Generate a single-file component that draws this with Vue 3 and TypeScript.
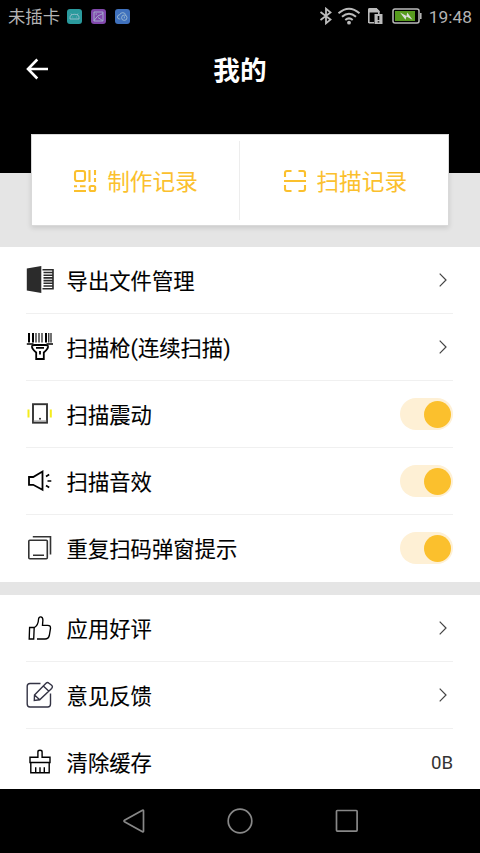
<script setup lang="ts">
import { ref } from 'vue'

type IconName = 'export' | 'gun' | 'vibrate' | 'sound' | 'popup' | 'like' | 'feedback' | 'clean'

interface Row {
  icon: IconName
  label: string
  kind: 'link' | 'switch' | 'value'
  value?: string
  on?: boolean
}

const groups = ref<Row[][]>([
  [
    { icon: 'export', label: '导出文件管理', kind: 'link' },
    { icon: 'gun', label: '扫描枪(连续扫描)', kind: 'link' },
    { icon: 'vibrate', label: '扫描震动', kind: 'switch', on: true },
    { icon: 'sound', label: '扫描音效', kind: 'switch', on: true },
    { icon: 'popup', label: '重复扫码弹窗提示', kind: 'switch', on: true },
  ],
  [
    { icon: 'like', label: '应用好评', kind: 'link' },
    { icon: 'feedback', label: '意见反馈', kind: 'link' },
    { icon: 'clean', label: '清除缓存', kind: 'value', value: '0B' },
  ],
])
</script>

<template>
  <div class="screen">
    <header class="top">
      <div class="status">
        <span class="carrier">未插卡</span>
        <span class="badge teal">
          <svg viewBox="0 0 15 15"><path d="M3 10V8.5Q3 5.3 7.5 5.3T12 8.5V10ZM4.8 5.8 4 4.6M10.2 5.8 11 4.6M5.5 8h.6M9 8h.6" /></svg>
        </span>
        <span class="badge purple">
          <svg viewBox="0 0 15 15"><path d="M3 3h9v9H3ZM3 11.5Q6 6 12 4.5M7 8.5l4.5 3M4.5 5h1.5" /></svg>
        </span>
        <span class="badge blue">
          <svg viewBox="0 0 15 15"><path d="M5.3 10H4.5a2 2 0 0 1 0-4.1 3.4 3.4 0 0 1 6.3-.2M9.3 6a2.7 2.7 0 1 1 0 5.4 2.7 2.7 0 0 1 0-5.4ZM9.3 7.3v2" /></svg>
        </span>
        <span class="spacer"></span>
        <svg class="bt" viewBox="0 0 14 18"><path d="M1.5 5 11.5 12.6 7 16.3V1.7L11.5 5.4 1.5 13" /></svg>
        <svg class="wifi" viewBox="0 0 24 18">
          <path d="M1.5 6.3Q12-2.8 22.5 6.3M5 9.8Q12 3.8 19 9.8M8.3 13Q12 9.8 15.7 13" />
          <circle cx="12" cy="15.7" r="1.9" />
        </svg>
        <svg class="sim" viewBox="0 0 16 18">
          <path class="line" d="M1.8 16V3Q1.8 1.800 3 1.800H9L11.800 4.500V7M1.800 15.700H7" />
          <path class="fill" d="M1 5V3Q1 1 3 1H9.500L12.600 4V5.500H1Z" />
          <path class="fill" d="M7.500 7H15.500V17H7.500Z" />
          <path class="mark" d="M11.500 9v4M11.500 14.300v1.300" />
        </svg>
        <svg class="battery" viewBox="0 0 30 16">
          <rect class="shell" x="1" y="1" width="26" height="14" rx="2" />
          <path class="shell" d="M28.8 5v6" />
          <path class="charge" d="M3 3h20v10H3z" />
          <path class="bolt" d="M8 4.5 14.500 8l.8-3.500 5.200 7.300-6-3.200-1 3.200Z" />
        </svg>
        <span class="clock">19:48</span>
      </div>
      <div class="titlebar">
        <svg class="back" viewBox="0 0 24 24"><path d="M12.300 1.500 3 11l9.300 9.500M3 11H23" /></svg>
        <h1>我的</h1>
      </div>
    </header>

    <section class="hero">
      <div class="card">
        <button class="tab">
          <svg class="tab-icon" viewBox="0 0 24 24">
            <rect x="2" y="2" width="10" height="10" rx="2" />
            <path d="M16.5 1v12M22 1v5M22 9v4M1 17.2h3M7 17.2h5.5M1 22h12" />
            <rect x="16.700" y="17" width="5.500" height="5" rx="1.500" />
          </svg>
          <span>制作记录</span>
        </button>
        <button class="tab">
          <svg class="tab-icon" viewBox="0 0 24 24">
            <path d="M2 8V4Q2 2 4 2H8.500M15.500 2H20Q22 2 22 4V8M1 12H23M2 16V20Q2 22 4 22H8.500M15.500 22H20Q22 22 22 20V16" />
          </svg>
          <span>扫描记录</span>
        </button>
      </div>
    </section>

    <main class="groups">
      <section v-for="(rows, g) in groups" :key="g" class="group">
        <div v-for="row in rows" :key="row.icon" class="row">
          <svg v-if="row.icon === 'export'" class="icon" viewBox="0 0 28 28">
            <path class="dark" d="M.8 2.5 15.3 0v27L.8 24.5Z" />
            <path d="M16.500 3.700H27V22.800H16.500M17.500 6.500H27M17.500 9.200H27M17.500 11.900H27M17.500 14.600H27M17.500 17.300H27M17.500 20H27" stroke="#2b2b2b" stroke-width="1.600" />
          </svg>
          <svg v-else-if="row.icon === 'gun'" class="icon" viewBox="0 0 28 28">
            <path d="M3 0v9.500M7 0v9.500M20 0v9.500" stroke-width="2" />
            <path d="M10 0v9.500M13 0v9.500M16 0v9.500M22.800 0v9.500M25 0v9.500" stroke-width="1.100" />
            <path d="M.8 11H7.500M20.500 11H27" stroke-width="1.400" />
            <path d="M8.500 12H19.500Q22.300 12 22 14L21.500 15.500Q20.200 17.500 17.800 19.500V26H10.200V19.500Q7.800 17.500 6.500 15.500L6 14Q5.700 12 8.500 12Z" stroke-width="1.800" />
            <path d="M10 14.800h8M14 18v3.500" stroke-width="1.800" />
          </svg>
          <svg v-else-if="row.icon === 'vibrate'" class="icon" viewBox="0 0 28 28">
            <path class="yellow" d="M2.500 9.500v8M24.800 9.500v8" />
            <rect x="7" y="4.200" width="14" height="18.500" stroke="#333" stroke-width="1.900" />
            <path d="M7 21h14" stroke="#777" stroke-width=".8" />
            <circle class="dark" cx="14" cy="18.700" r="1" />
          </svg>
          <svg v-else-if="row.icon === 'sound'" class="icon" viewBox="0 0 28 28">
            <path d="M3 10H7.200L16.500 4.500V22.700L7.200 17.800H3Z" stroke-width="1.800" />
            <path d="M20 9.500 23.200 7.500M21.500 14H25.300M20 18.500 23.200 20.500" stroke-width="1.700" />
          </svg>
          <svg v-else-if="row.icon === 'popup'" class="icon" viewBox="0 0 28 28">
            <rect x="2.800" y="6.200" width="18.500" height="18.500" rx="1" stroke="#333" stroke-width="1.600" />
            <path d="M6.800 2.800H24.500V20.500M7 21.200H18" stroke="#333" stroke-width="1.600" />
          </svg>
          <svg v-else-if="row.icon === 'like'" class="icon" viewBox="0 0 28 28">
            <path d="M3.600 13.500H8.200L7.700 25H3.200ZM8.400 13.500Q12.300 11 12.500 5.500C12.600 2 16.800 2 16.900 6L16.500 11.300H21.700Q24.700 11.300 24.500 14.300L23.300 21.500Q22.500 25 19 25H11" stroke-width="1.350" />
          </svg>
          <svg v-else-if="row.icon === 'feedback'" class="icon" viewBox="0 0 28 28">
            <path d="M14.500 2.500H4Q1.200 2.500 1.200 5.300V23Q1.200 26 4 26H21.700Q24.500 26 24.500 23V12.500" stroke="#334" stroke-width="1.400" />
            <path d="M8.500 14 20 2.200Q21.500 .7 23 2.200L25.600 4.300Q27.200 5.800 25.600 7.500L13.700 18.800 8.300 19.500ZM8.500 14 13.700 18.800M17.300 5 22.700 10" stroke="#334" stroke-width="1.400" />
          </svg>
          <svg v-else class="icon" viewBox="0 0 28 28">
            <path d="M4 14.500V9.300H11.900V4Q11.900 2.300 14 2.300T16.100 4V9.300H24V14.500ZM4.800 14.500V24.700H23.200V14.500M9.700 24.700V19.200M14 24.700V19.200M18.300 24.700V19.200" stroke-width="1.400" />
          </svg>

          <span class="label">{{ row.label }}</span>

          <svg v-if="row.kind === 'link'" class="chevron" viewBox="0 0 8 14"><path d="M.7.7 7 7 .7 13.3" /></svg>
          <button
            v-else-if="row.kind === 'switch'"
            class="switch"
            :class="{ on: row.on }"
            role="switch"
            :aria-checked="row.on"
            @click="row.on = !row.on"
          >
            <span class="knob"></span>
          </button>
          <span v-else class="value">{{ row.value }}</span>
        </div>
      </section>
    </main>

    <nav class="nav">
      <svg viewBox="0 0 28 28"><path d="M24.500 3.800V24.200Q24.500 25.200 23.500 24.700L5.500 14.700Q4.500 14 5.500 13.300L23.500 3.300Q24.500 2.800 24.500 3.800Z" /></svg>
      <svg viewBox="0 0 28 28"><circle cx="14" cy="14" r="11.8" /></svg>
      <svg viewBox="0 0 28 28"><rect x="3.500" y="3.500" width="20.600" height="20.600" rx=".8" /></svg>
    </nav>
  </div>
</template>

<style>
body {
  margin: 0;
}
</style>

<style scoped>
.screen {
  display: flex;
  flex-direction: column;
  width: 480px;
  height: 853px;
  overflow: hidden;
  background: #e5e5e5;
  font-family: Roboto, 'Noto Sans CJK SC', sans-serif;
  color: #000;
}

svg {
  display: block;
  flex: none;
  fill: none;
  stroke: #000;
}

button {
  padding: 0;
  border: 0;
  background: none;
  font: inherit;
}

.top {
  flex: none;
  height: 173px;
  background: #000;
}

.status {
  display: flex;
  align-items: center;
  height: 32px;
  padding: 0 8px;
  color: #b4b4b4;
}

.carrier {
  margin-right: 7px;
  padding-top: 2px;
  font-size: 17.33px;
  line-height: 32px;
}

.badge {
  width: 15px;
  height: 15px;
  margin-right: 9px;
  border-radius: 3px;
}

.badge svg {
  stroke: #a9c4d4;
  stroke-width: 0.8;
}

.teal {
  background: #2a9a9d;
}

.purple {
  background: #8148ac;
}

.blue {
  background: #3f71bd;
}

.spacer {
  flex: 1;
}

.bt {
  width: 14px;
  height: 18px;
  margin-right: 4px;
  stroke: #bbb;
  stroke-width: 1.8;
}

.wifi {
  width: 24px;
  height: 18px;
  margin-right: 6px;
  stroke: #bbb;
  stroke-width: 2;
}

.wifi circle {
  fill: #bbb;
  stroke: none;
}

.sim {
  width: 16px;
  height: 18px;
  margin-right: 9px;
}

.sim .line {
  stroke: #bbb;
  stroke-width: 1.6;
}

.sim .fill {
  fill: #bbb;
  stroke: none;
}

.sim .mark {
  stroke: #000;
  stroke-width: 1.6;
}

.battery {
  width: 30px;
  height: 16px;
  margin-right: 7px;
}

.shell {
  stroke: #bbb;
  stroke-width: 1.5;
}

.charge {
  fill: #579b1e;
  stroke: none;
}

.bolt {
  fill: #ddd;
  stroke: none;
}

.clock {
  padding-top: 1px;
  font-size: 17.33px;
  line-height: 32px;
}

.titlebar {
  display: grid;
  grid-template-columns: 24px 1fr 24px;
  align-items: center;
  height: 75px;
  padding: 0 25px;
}

.back {
  width: 24px;
  height: 24px;
  stroke: #fff;
  stroke-width: 2.6;
}

h1 {
  margin: 0;
  padding-top: 2px;
  color: #fff;
  font-size: 26.67px;
  font-weight: 700;
  line-height: 40px;
  text-align: center;
}

.hero {
  flex: none;
  height: 74px;
  padding: 0 31px;
}

.card {
  display: flex;
  box-sizing: border-box;
  height: 92px;
  margin-top: -39px;
  border: 1px solid #d9d9d9;
  background: #fff;
  box-shadow: 0 2px 5px rgba(0, 0, 0, 0.12);
}

.tab {
  box-sizing: border-box;
  display: flex;
  flex: 0 0 207px;
  align-items: center;
  justify-content: center;
  gap: 10px;
  margin: 6px 0 5px;
  padding-top: 4px;
  color: #fbc02d;
  font-size: 22.67px;
  line-height: 34px;
}

.tab + .tab {
  flex: 1;
  gap: 9.5px;
  padding-left: 2px;
  border-left: 1px solid #ededed;
}

.tab-icon {
  width: 24px;
  height: 24px;
  margin-top: -4px;
  stroke: #fbc02d;
  stroke-width: 2.1;
}

.groups {
  display: flex;
  flex: 1;
  flex-direction: column;
  gap: 13px;
  min-height: 0;
  overflow: hidden;
}

.group {
  flex: none;
  padding: 0 27px 0 26px;
  background: #fff;
}

.row {
  display: flex;
  align-items: center;
  height: 66px;
  border-bottom: 1px solid #f0f0f0;
}

.row:last-child {
  border-bottom-color: #fff;
}

.icon {
  width: 28px;
  height: 28px;
}

.dark {
  fill: #2b2b2b;
  stroke: none;
}

.yellow {
  stroke: #f4ec1c;
  stroke-width: 2;
}

.label {
  flex: 1;
  margin-left: 12.6px;
  padding-top: 4px;
  font-size: 21.33px;
  line-height: 32px;
  -webkit-text-stroke: 0.12px currentColor;
}

.chevron {
  width: 8px;
  height: 14px;
  margin-right: 6px;
  stroke: #444;
  stroke-width: 1.2;
}

.switch {
  box-sizing: border-box;
  width: 53px;
  height: 32px;
  padding: 2px;
  border-radius: 16px;
  background: #e4e4e4;
}

.switch.on {
  background: #fef0d5;
}

.knob {
  display: block;
  width: 27px;
  height: 27px;
  border-radius: 50%;
  background: #fff;
}

.on .knob {
  margin-left: 22px;
  background: #fbc02d;
}

.value {
  padding-top: 2px;
  color: #333;
  font-size: 18.67px;
}

.nav {
  display: flex;
  flex: none;
  align-items: center;
  justify-content: center;
  gap: 79px;
  height: 64px;
  background: #000;
}

.nav svg {
  width: 28px;
  height: 28px;
  stroke: #888;
  stroke-width: 1.7;
}
</style>
